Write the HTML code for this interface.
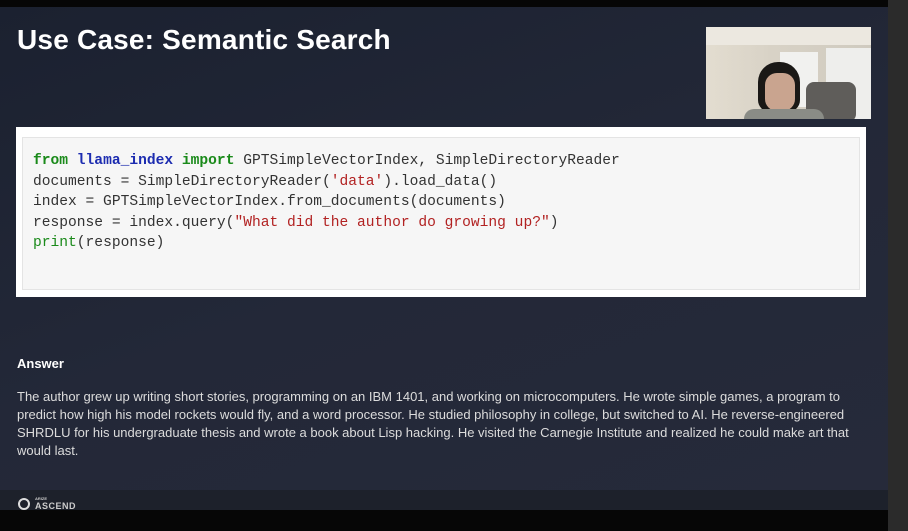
<!DOCTYPE html>
<html><head><style>
*{margin:0;padding:0;box-sizing:border-box}
body{width:908px;height:531px;background:#060606;position:relative;overflow:hidden;font-family:"Liberation Sans",sans-serif}
.slide{position:absolute;left:0;top:7px;width:888px;height:503px;background:linear-gradient(160deg,#1b2130 0%,#232838 50%,#262a3a 100%)}
.right{position:absolute;left:888px;top:0;width:20px;height:531px;background:#2b2b2b}
.foot{position:absolute;left:0;top:490px;width:888px;height:20px;background:#1d212b}
h1{position:absolute;left:17px;top:17px;color:#fff;font-size:28px;font-weight:bold;letter-spacing:0.2px}
.cam{position:absolute;left:706px;top:27px;width:165px;height:92px;background:linear-gradient(90deg,#e3ddd0 0%,#d8d2c6 40%,#cfcabf 100%);overflow:hidden}
.code{position:absolute;left:16px;top:127px;width:850px;height:170px;background:#fff}
.inner{position:absolute;left:6px;top:10px;width:838px;height:153px;background:#f6f6f6;border:1px solid #e4e4e4}
pre{position:absolute;left:10px;top:13px;font-family:"Liberation Mono",monospace;font-size:14.6px;line-height:20.5px;color:#333}
.k{color:#1a8a1a;font-weight:bold}.m{color:#1c2cb0;font-weight:bold}.s{color:#b22222}.b{color:#1a8a1a}
.ans{position:absolute;left:17px;top:356px;color:#fff;font-size:13px;font-weight:bold}
.body{position:absolute;left:17px;top:388px;width:835px;color:#dcdcdc;font-size:13px;line-height:18px}
</style></head><body>
<div class="slide">
<h1>Use Case: Semantic Search</h1>
</div>
<div class="cam">
<div style="position:absolute;left:0;top:0;width:165px;height:18px;background:#ece8e0"></div>
<div style="position:absolute;left:74px;top:25px;width:38px;height:55px;background:#f1f1ef"></div>
<div style="position:absolute;left:120px;top:21px;width:45px;height:71px;background:#eeeeec"></div>
<div style="position:absolute;left:100px;top:55px;width:50px;height:40px;background:#5f5d5a;border-radius:8px"></div>
<div style="position:absolute;left:52px;top:35px;width:42px;height:50px;background:#1a1816;border-radius:20px 20px 12px 12px"></div>
<div style="position:absolute;left:59px;top:46px;width:30px;height:38px;background:#c9a48f;border-radius:12px"></div>
<div style="position:absolute;left:38px;top:82px;width:80px;height:14px;background:#8a8c86;border-radius:10px 10px 0 0"></div>
</div>
<div class="code"><div class="inner">
<pre><span class="k">from</span> <span class="m">llama_index</span> <span class="k">import</span> GPTSimpleVectorIndex, SimpleDirectoryReader
documents = SimpleDirectoryReader(<span class="s">'data'</span>).load_data()
index = GPTSimpleVectorIndex.from_documents(documents)
response = index.query(<span class="s">"What did the author do growing up?"</span>)
<span class="b">print</span>(response)</pre>
</div></div>
<div class="ans">Answer</div>
<div class="body">The author grew up writing short stories, programming on an IBM 1401, and working on microcomputers. He wrote simple games, a program to predict how high his model rockets would fly, and a word processor. He studied philosophy in college, but switched to AI. He reverse-engineered SHRDLU for his undergraduate thesis and wrote a book about Lisp hacking. He visited the Carnegie Institute and realized he could make art that would last.</div>
<div class="foot">
<div style="position:absolute;left:18px;top:8px;width:12px;height:12px;border:2px solid #ddd;border-radius:50%"></div>
<div style="position:absolute;left:35px;top:6px;color:#ccc;font-size:4px;font-weight:bold">ARIZE</div>
<div style="position:absolute;left:35px;top:11px;color:#ccc;font-size:9px;font-weight:bold;letter-spacing:0.5px">ASCEND</div>
</div>
<div class="right"></div>
</body></html>
